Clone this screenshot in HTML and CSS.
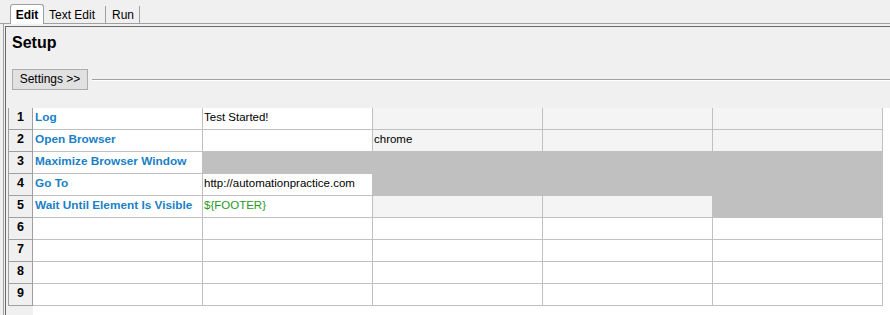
FILE: index.html
```html
<!DOCTYPE html>
<html lang="en">
<head>
    <meta charset="UTF-8">
    <title>Setup</title>
    <link rel="stylesheet" href="styles.css">
</head>
<body>
    <div class="tabs">
        <span class="tab tab_on">Edit</span>
        <span class="tab tab_text">Text Edit</span>
        <span class="tab tab_run">Run</span>
    </div>
    <div class="page">
        <div class="frame">
            <h1 class="title">Setup</h1>
            <div class="settings">
                <div class="btn">Settings &gt;&gt;</div>
                <div class="rule"></div>
            </div>
            <div class="grid">
                <div class="num">1</div>
                <div class="kw">Log</div>
                <div class="val">Test Started!</div>
                <div class="val opt"></div>
                <div class="val opt"></div>
                <div class="val opt"></div>

                <div class="num">2</div>
                <div class="kw">Open Browser</div>
                <div class="val"></div>
                <div class="val opt">chrome</div>
                <div class="val opt"></div>
                <div class="val opt"></div>

                <div class="num">3</div>
                <div class="kw">Maximize Browser Window</div>
                <div class="val na"></div>
                <div class="val na"></div>
                <div class="val na"></div>
                <div class="val na"></div>

                <div class="num">4</div>
                <div class="kw">Go To</div>
                <div class="val">http://automationpractice.com</div>
                <div class="val na"></div>
                <div class="val na"></div>
                <div class="val na"></div>

                <div class="num">5</div>
                <div class="kw">Wait Until Element Is Visible</div>
                <div class="val var">${FOOTER}</div>
                <div class="val opt"></div>
                <div class="val opt"></div>
                <div class="val na"></div>

                <div class="num">6</div>
                <div class="kw"></div><div class="val"></div><div class="val"></div><div class="val"></div><div class="val"></div>
                <div class="num">7</div>
                <div class="kw"></div><div class="val"></div><div class="val"></div><div class="val"></div><div class="val"></div>
                <div class="num">8</div>
                <div class="kw"></div><div class="val"></div><div class="val"></div><div class="val"></div><div class="val"></div>
                <div class="num">9</div>
                <div class="kw"></div><div class="val"></div><div class="val"></div><div class="val"></div><div class="val"></div>
            </div>
        </div>
    </div>
</body>
</html>
```

FILE: styles.css
```css
*{
    margin:0;padding:0;
    box-sizing:border-box;
}
html,body{
    width:100%;
    height:100%;
    overflow:hidden;
    background-color:#f0f0f0;
    color:#000;
    font-family:"Liberation Sans",Arial,sans-serif;
    font-size:12px;
}
/* tab bar */
.tabs{
    display:flex;
    align-items:flex-end;
    height:24px;
    padding-left:10px;
    border-bottom:1px solid #a0a0a0;
}
.tab{
    height:17px;
    line-height:18px;
    padding-left:6px;
    border-right:1px solid #a0a0a0;
}
.tab_text{
    width:62px;
    padding-left:5px;
}
.tab_run{
    width:34px;
}
.tab_on{
    width:34px;
    height:20px;
    line-height:21px;
    margin-bottom:-1px;
    padding-left:0;
    text-align:center;
    font-weight:bold;
    background-color:#fff;
    border:1px solid #a0a0a0;
    border-bottom:none;
    border-radius:3px 3px 0 0;
}
/* page frame */
.page{
    margin-left:3px;
    padding:2px 0 0 1px;
    border-left:1px solid #a0a0a0;
}
.frame{
    border-top:1px solid #696969;
    border-left:1px solid #696969;
}
.title{
    padding:6px 0 0 6px;
    font-size:16px;
    line-height:19px;
}
.settings{
    display:flex;
    align-items:center;
    gap:4px;
    margin-top:17px;
    padding-left:6px;
}
.btn{
    width:76px;
    height:21px;
    line-height:19px;
    text-align:center;
    border:1px solid #adadad;
    background-color:#e1e1e1;
}
.rule{
    flex:1;
    border-top:1px solid #a0a0a0;
    border-bottom:1px solid #fff;
}
/* table */
.grid{
    display:grid;
    grid-template-columns:25px repeat(5,170px);
    grid-auto-rows:22px;
    align-content:start;
    height:207px;
    margin:18px 0 0 2px;
    background:linear-gradient(to right,#f0f0f0 25px,#fff 25px);
    font-size:11.5px;
    line-height:19px;
}
.num,.kw,.val{
    border-right:1px solid #c0c0c0;
    border-bottom:1px solid #c0c0c0;
    white-space:nowrap;
    overflow:hidden;
}
.num{
    border:1px solid #a0a0a0;
    border-top:none;
    text-align:center;
    font-weight:bold;
    font-size:12.5px;
    background-color:#f0f0f0;
}
.kw{
    padding-left:2px;
    font-weight:bold;
    font-size:11.8px;
    color:#1a7fc6;
    background-color:#fff;
}
.val{
    padding-left:1px;
    background-color:#fff;
}
.opt{
    background-color:#f4f4f4;
}
.na{
    background-color:#c0c0c0;
}
.var{
    color:#259b24;
}
```
